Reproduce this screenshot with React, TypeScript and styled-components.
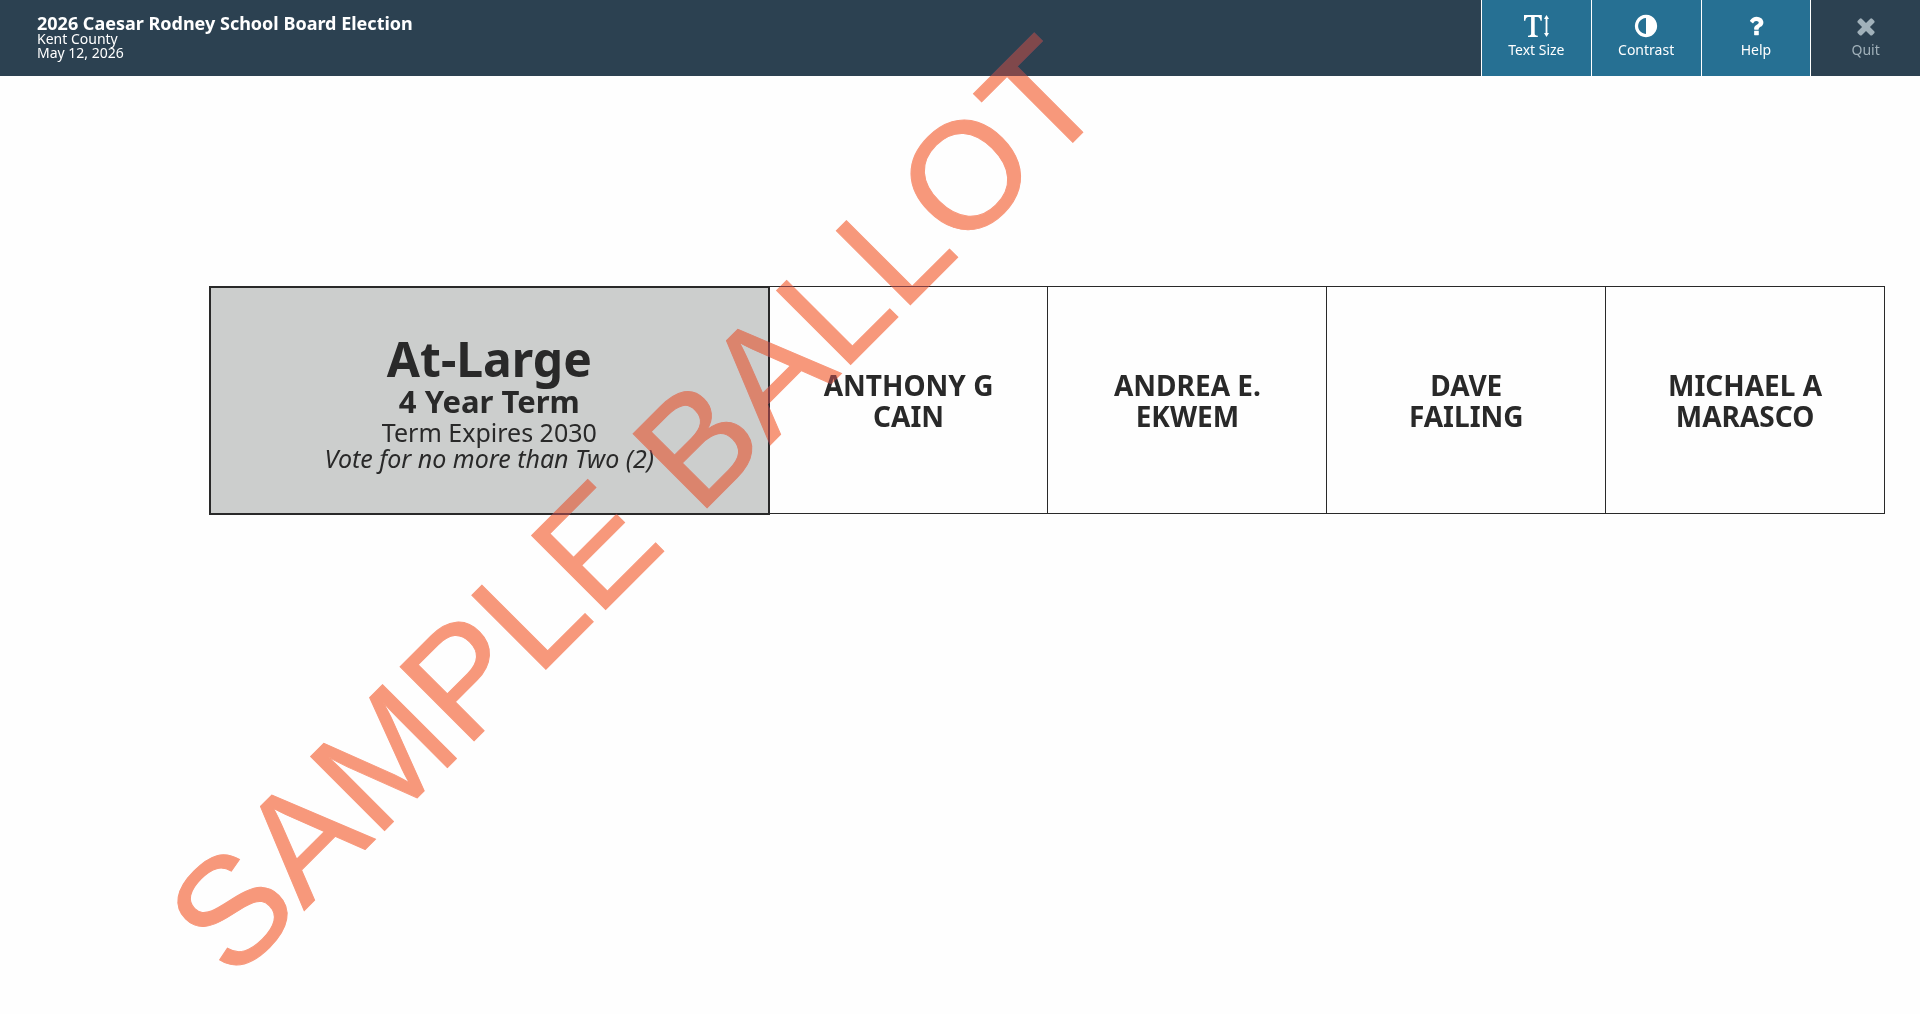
import React from "react";
import styled, { createGlobalStyle } from "styled-components";

const GlobalStyle = createGlobalStyle`
  * { box-sizing: border-box; }
  body {
    margin: 0;
    background: #fefefe;
    color: #292929;
    font-family: "Noto Sans", sans-serif;
  }
`;

const Page = styled.div`
  position: relative;
  min-height: 100vh;
  overflow: hidden;
  background: #fefefe;
`;

const Header = styled.header`
  display: flex;
  justify-content: space-between;
  height: 76px;
  background: #2c4151;
  color: #fff;
`;

const Heading = styled.div`
  padding: 14px 37px 0;
`;

const Title = styled.h1`
  margin: 0;
  font-size: 18px;
  line-height: 18px;
  font-weight: 700;
`;

const Detail = styled.p`
  margin: 0;
  font-size: 14px;
  line-height: 14px;
`;

const Toolbar = styled.nav`
  display: flex;
  width: 439px;
`;

const ToolButton = styled.button`
  display: flex;
  flex: 1 1 0;
  flex-direction: column;
  align-items: center;
  padding: 13px 0 0;
  gap: 2px;
  border: 0;
  border-left: 1px solid #fff;
  background: #267093;
  color: #fff;
  font: 14px/18px "Noto Sans", sans-serif;
  cursor: pointer;

  &:disabled {
    background: transparent;
    color: #a1b1ba;
    cursor: default;
  }
`;

const Icon = styled.svg`
  width: 26px;
  height: 26px;
  fill: currentColor;
`;

const Ballot = styled.main`
  padding: 210px 35px 0 209px;
`;

const Contest = styled.section`
  display: grid;
  grid-template-columns: calc(100% / 3 + 2px) repeat(4, 1fr);
  min-height: 228px;
`;

const Office = styled.div`
  display: flex;
  flex-direction: column;
  align-items: center;
  justify-content: center;
  margin-bottom: -1px;
  padding-top: 4px;
  border: 2px solid #292929;
  background: #cccecd;
  text-align: center;
`;

const OfficeName = styled.h2`
  margin: 0;
  font-size: 48px;
  line-height: 48px;
`;

const Term = styled.h3`
  margin: 0;
  font-size: 31px;
  line-height: 36px;
`;

const Note = styled.p<{ $italic?: boolean }>`
  margin: 0;
  font-size: 25px;
  line-height: 26px;
  font-style: ${(p) => (p.$italic ? "italic" : "normal")};
`;

const Candidate = styled.button`
  display: flex;
  flex-direction: column;
  align-items: center;
  justify-content: center;
  padding: 2px 8px 0;
  border: 1px solid #292929;
  border-left: 0;
  background: transparent;
  color: inherit;
  font: 700 28px/31px "Noto Sans", sans-serif;
  cursor: pointer;
`;

/* A pale stamp with a multiplied tint over it, so dark areas stay dark. */
const Watermark = styled.div`
  pointer-events: none;

  span,
  &::after {
    position: absolute;
    top: 506px;
    left: 634px;
    transform: translate(-50%, -50%) rotate(-45deg);
    font: 152px/1 "Liberation Sans", Arial, sans-serif;
    -webkit-text-stroke: 1px currentColor;
    white-space: nowrap;
  }

  span {
    color: rgb(241, 136, 255);
    opacity: 0.43;
  }

  &::after {
    content: "SAMPLE BALLOT";
    color: rgb(254, 192, 123);
    mix-blend-mode: multiply;
  }
`;

const candidates = [
  ["ANTHONY G", "CAIN"],
  ["ANDREA E.", "EKWEM"],
  ["DAVE", "FAILING"],
  ["MICHAEL A", "MARASCO"],
];

export default function App() {
  return (
    <Page>
      <GlobalStyle />
      <Header>
        <Heading>
          <Title>2026 Caesar Rodney School Board Election</Title>
          <Detail>Kent County</Detail>
          <Detail>May 12, 2026</Detail>
        </Heading>
        <Toolbar>
          <ToolButton>
            <Icon viewBox="0 0 26 26">
              <path d="M1 2h17.800v5.800h-1.300c-.4-2.800-1.200-3.900-3.200-3.900h-2.600V20.600c0 1.500.7 1.900 3.100 2.100V24H5v-1.300c2.400-.2 3.100-.6 3.100-2.100V3.900H5.500C3.500 3.900 2.700 5 2.300 7.800H1z" />
              <path d="M23.500 2l2.500 4h-1.600v14H26l-2.500 4-2.500-4h1.600V6H21z" />
            </Icon>
            Text Size
          </ToolButton>
          <ToolButton>
            <Icon viewBox="0 0 1792 1792">
              <path d="M896 1440v-1088q-148 0-273 73t-198 198-73 273 73 273 198 198 273 73zm768-544q0 209-103 385.500t-279.500 279.500-385.500 103-385.500-103-279.500-279.500-103-385.500 103-385.500 279.500-279.500 385.500-103 385.500 103 279.500 279.500 103 385.500z" />
            </Icon>
            Contrast
          </ToolButton>
          <ToolButton>
            <Icon viewBox="0 0 1792 1792">
              <path d="M1088 1256v240q0 16-12 28t-28 12h-240q-16 0-28-12t-12-28v-240q0-16 12-28t28-12h240q16 0 28 12t12 28zm316-600q0 54-15.500 101t-35 76.500-55 59.500-57.500 43.500-61 35.500q-41 23-68.500 65t-27.500 67q0 17-12 32.500t-28 15.500h-240q-15 0-25.500-18.500t-10.500-37.500v-45q0-83 65-156.500t143-108.500q59-27 84-56t25-76q0-42-46.500-74t-107.500-32q-65 0-108 29-35 25-107 115-13 16-31 16-12 0-25-8l-164-125q-13-10-15.500-25t5.500-28q160-266 464-266 80 0 161 31t146 83 106 127.500 41 158.500z" />
            </Icon>
            Help
          </ToolButton>
          <ToolButton disabled>
            <Icon viewBox="0 0 1792 1792">
              <path d="M1490 1322q0 40-28 68l-136 136q-28 28-68 28t-68-28l-294-294-294 294q-28 28-68 28t-68-28l-136-136q-28-28-28-68t28-68l294-294-294-294q-28-28-28-68t28-68l136-136q28-28 68-28t68 28l294 294 294-294q28-28 68-28t68 28l136 136q28 28 28 68t-28 68l-294 294 294 294q28 28 28 68z" />
            </Icon>
            Quit
          </ToolButton>
        </Toolbar>
      </Header>
      <Ballot>
        <Contest>
          <Office>
            <OfficeName>At-Large</OfficeName>
            <Term>4 Year Term</Term>
            <Note>Term Expires 2030</Note>
            <Note $italic>Vote for no more than Two (2)</Note>
          </Office>
          {candidates.map(([first, last]) => (
            <Candidate key={last}>
              <span>{first}</span>
              <span>{last}</span>
            </Candidate>
          ))}
        </Contest>
      </Ballot>
      <Watermark>
        <span>SAMPLE BALLOT</span>
      </Watermark>
    </Page>
  );
}
